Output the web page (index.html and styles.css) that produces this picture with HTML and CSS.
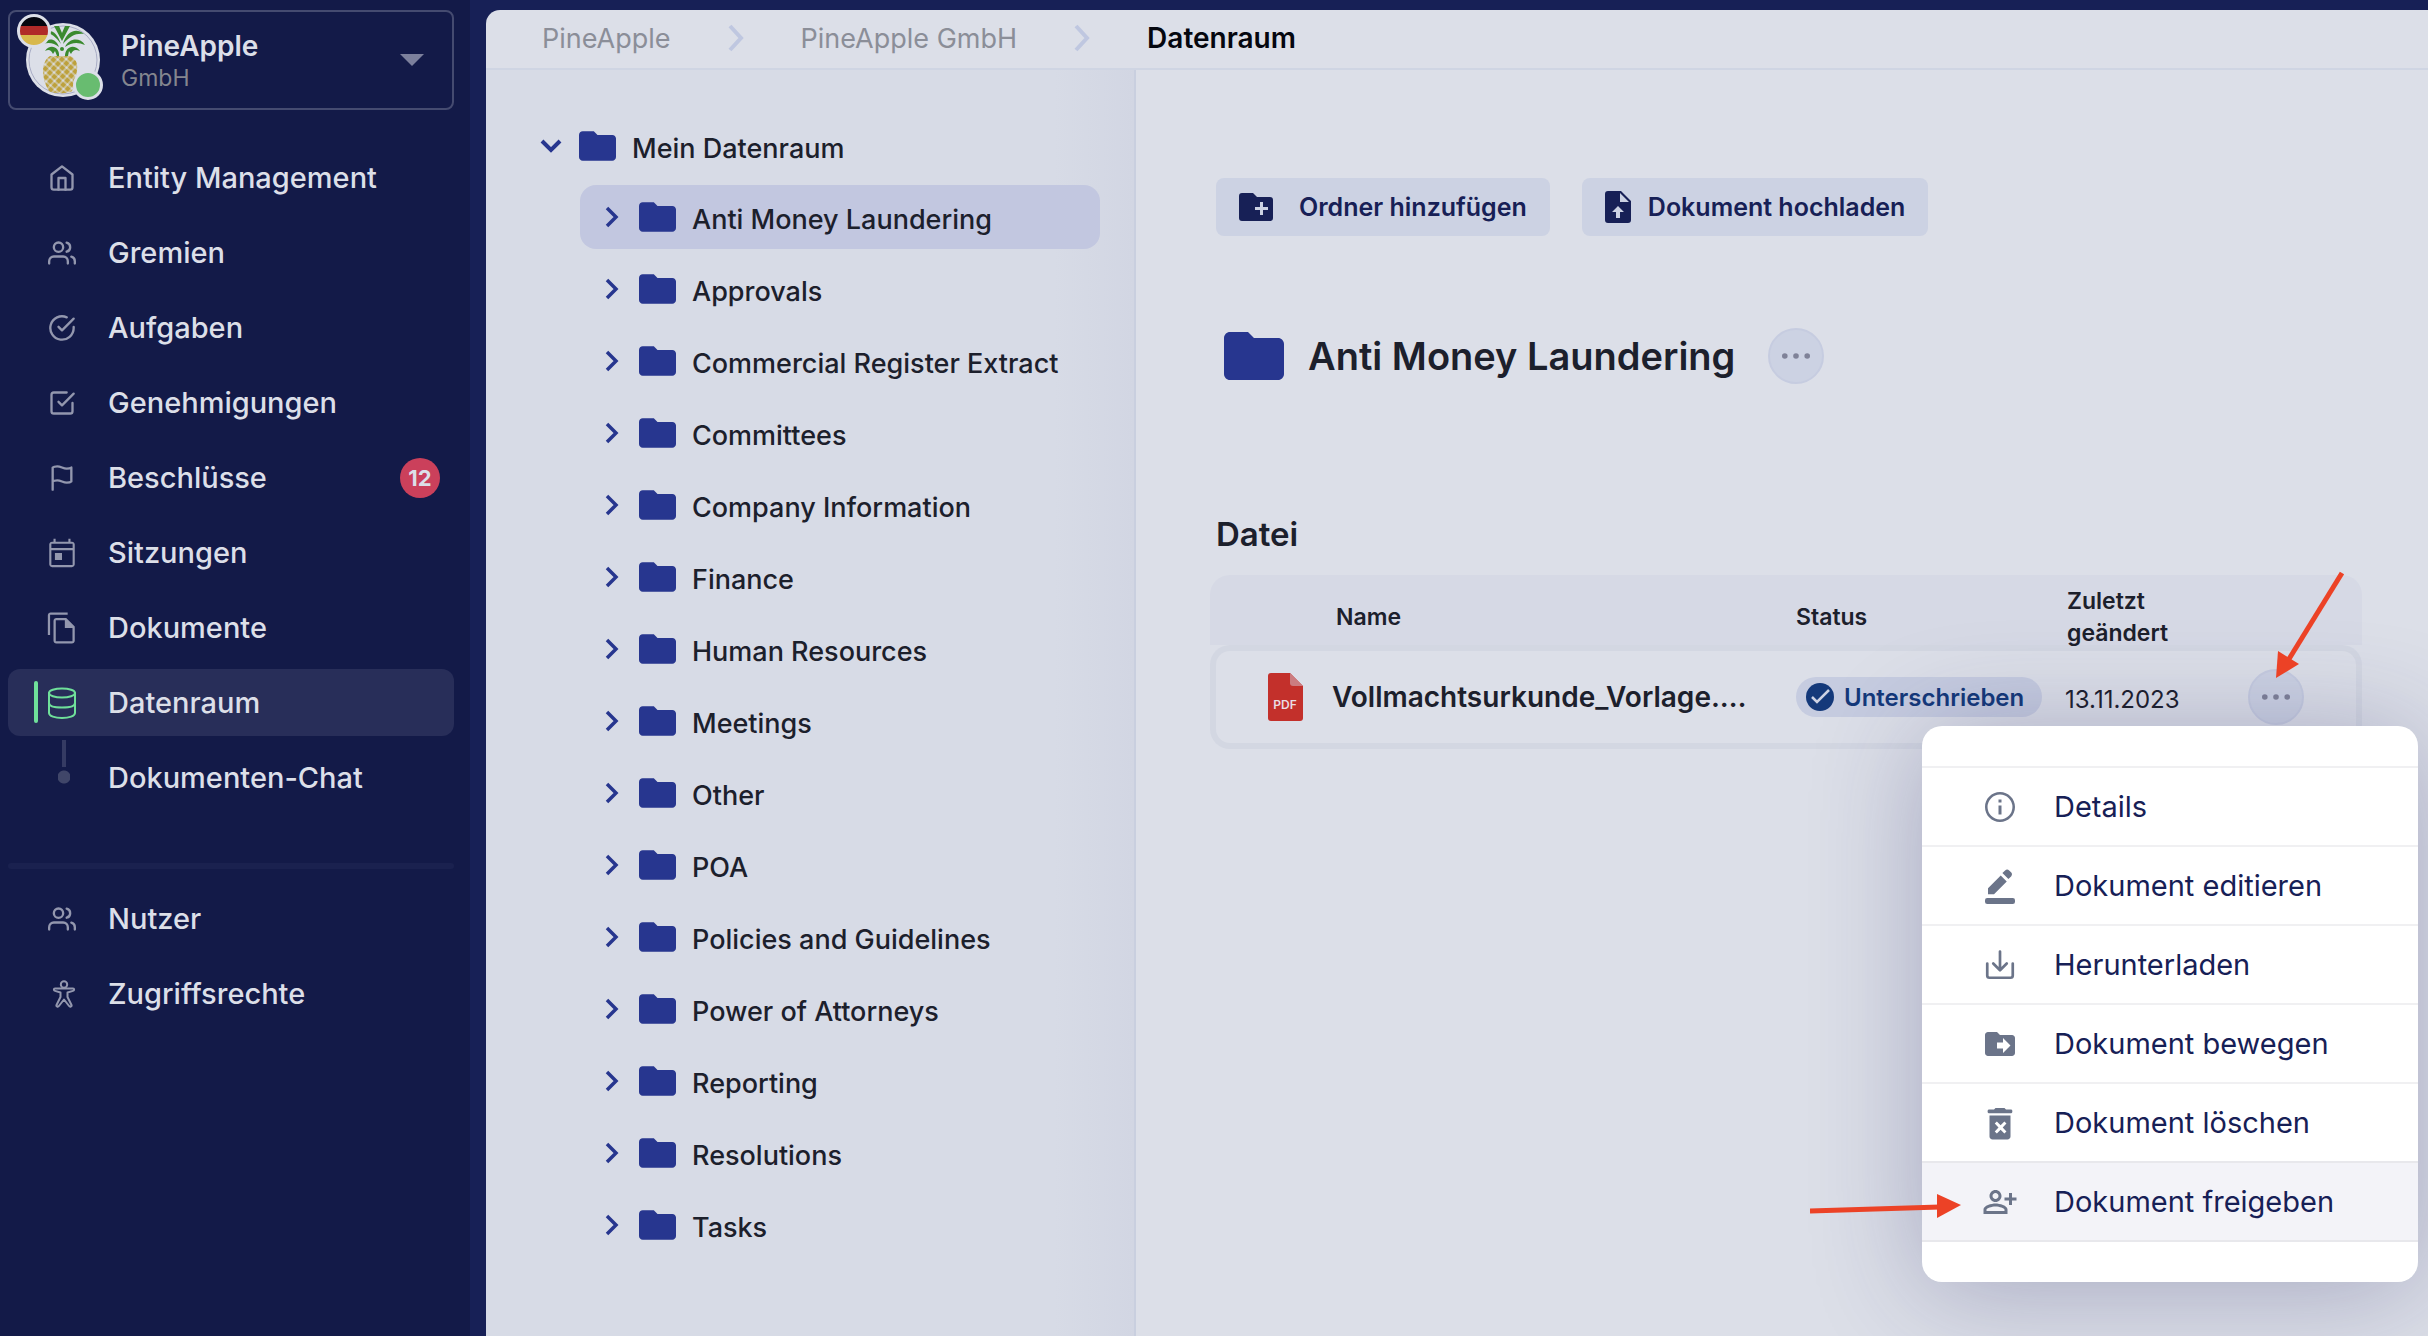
FILE: index.html
```html
<!DOCTYPE html>
<html lang="de">
<head>
  <meta charset="UTF-8" />
  <meta name="viewport" content="width=device-width, initial-scale=1.0"/>
  <title>Datenraum - PineApple GmbH</title>
  <link rel="stylesheet" href="styles.css">
</head>
<body>
  <!-- shared icon shapes -->
  <svg class="sprite" aria-hidden="true">
    <symbol id="i-folder" viewBox="0 0 20 16">
      <path d="M8 0H2C.9 0 0 .9 0 2v12c0 1.1.9 2 2 2h16c1.1 0 2-.9 2-2V4c0-1.1-.9-2-2-2h-8L8 0z"/>
    </symbol>
    <symbol id="i-right" viewBox="0 0 14 22">
      <path d="M2 2l9 9-9 9" fill="none" stroke="currentColor" stroke-width="3.5"/>
    </symbol>
    <symbol id="i-users" viewBox="0 0 24 24">
      <g fill="none" stroke="currentColor" stroke-width="2" stroke-linecap="round" stroke-linejoin="round">
        <path d="M17 21v-2a4 4 0 0 0-4-4H5a4 4 0 0 0-4 4v2"/>
        <circle cx="9" cy="7" r="4"/>
        <path d="M23 21v-2a4 4 0 0 0-3-3.87M16 3.13a4 4 0 0 1 0 7.75"/>
      </g>
    </symbol>
    <symbol id="i-dots" viewBox="0 0 30 6">
      <circle cx="3" cy="3" r="3"/><circle cx="15" cy="3" r="3"/><circle cx="27" cy="3" r="3"/>
    </symbol>
  </svg>

  <div class="app">
    <aside class="sidebar">
      <button class="company" type="button">
        <span class="avatar">
          <svg class="logo" viewBox="0 0 74 74">
            <defs>
              <pattern id="skin" width="6" height="6" patternUnits="userSpaceOnUse" patternTransform="rotate(42)">
                <rect width="6" height="6" fill="#dcdfe8"/>
                <rect x=".5" y=".5" width="5" height="5" rx="1" fill="#bda13c"/>
              </pattern>
            </defs>
            <circle cx="37" cy="37" r="37" fill="#dcdfe8"/>
            <circle cx="37" cy="37" r="34" fill="none" stroke="#a9adc6" stroke-width="1"/>
            <path d="M24 33h20c6 2 8 8 7 14-1 8-1 15-5 21-3 3-19 3-23 0-4-6-6-13-6-20 0-6 2-12 7-15z" fill="url(#skin)"/>
            <g fill="#3a8a2e">
              <path d="M28 3h5l3 7 3-7h5l-8 15z"/>
              <path d="M35 21C31 10 26 6 19 9c6 1 11 5 16 12zM37 21C40 9 50 4 58 11c-8-1-14 2-21 10z"/>
              <path d="M33 24c-3-9-11-10-16-3 6-2 11-1 16 3zM39 24c4-9 15-10 20-2-7-3-13-3-20 2z"/>
              <path d="M33 33c1-9-9-13-14-5 4-2 6-1 8 3l2-3 2 5zM39 33c0-9 9-13 15-5-5-2-7-1-9 3l-2-3-1 5z"/>
              <circle cx="36" cy="26" r="2"/>
            </g>
          </svg>
          <span class="flag"></span>
          <span class="online"></span>
        </span>
        <span class="company-text">
          <strong>PineApple</strong>
          <small>GmbH</small>
        </span>
        <svg class="caret" viewBox="0 0 24 12"><path d="M0 0h24L12 12z"/></svg>
      </button>

      <nav class="menu">
        <a href="#">
          <svg class="ico line" viewBox="0 0 24 24"><path d="M3 9l9-7 9 7v11a2 2 0 0 1-2 2H5a2 2 0 0 1-2-2z"/><path d="M9 22V12h6v10"/></svg>
          <span>Entity Management</span>
        </a>
        <a href="#">
          <svg class="ico"><use href="#i-users"/></svg>
          <span>Gremien</span>
        </a>
        <a href="#">
          <svg class="ico line" viewBox="0 0 24 24"><path d="M22 11.08V12a10 10 0 1 1-5.93-9.14"/><path d="M22 4L12 14.01l-3-3"/></svg>
          <span>Aufgaben</span>
        </a>
        <a href="#">
          <svg class="ico line" viewBox="0 0 24 24"><path d="M9 11l3 3L22 4"/><path d="M21 12v7a2 2 0 0 1-2 2H5a2 2 0 0 1-2-2V5a2 2 0 0 1 2-2h11"/></svg>
          <span>Genehmigungen</span>
        </a>
        <a href="#">
          <svg class="ico line" viewBox="0 0 24 24"><path d="M4 15s1-1 4-1 5 2 8 2 4-1 4-1V3s-1 1-4 1-5-2-8-2-4 1-4 1zM4 22v-7"/></svg>
          <span>Beschlüsse</span>
          <b class="badge">12</b>
        </a>
        <a href="#">
          <svg class="ico big" viewBox="0 0 24 24"><path d="M19 4h-1V2h-1.5v2h-9V2H6v2H5c-1.11 0-2 .9-2 2v14c0 1.1.89 2 2 2h14c1.1 0 2-.9 2-2V6c0-1.1-.9-2-2-2zm.5 16.5h-15V10h15zm0-12h-15v-3h15zM7 12h5v5H7z"/></svg>
          <span>Sitzungen</span>
        </a>
        <a href="#">
          <svg class="ico big" viewBox="0 0 24 24"><path d="M16 1H4c-1.1 0-2 .9-2 2v14h1.6V2.6H16V1zm-1 4H8c-1.1 0-2 .9-2 2v14c0 1.1.89 2 2 2h11c1.1 0 2-.9 2-2V11l-6-6zM7.6 21.4V6.6H14V12h5.4v9.4z"/></svg>
          <span>Dokumente</span>
        </a>
        <a href="#" class="active">
          <svg class="ico line" viewBox="0 0 28 32"><ellipse cx="14" cy="6" rx="13" ry="4.5"/><path d="M1 6v20c0 3 6 5 13 5s13-2 13-5V6M1 16c0 3 6 4.5 13 4.5s13-1.5 13-4.5"/></svg>
          <span>Datenraum</span>
        </a>
        <a href="#" class="sub">
          <i class="branch"></i>
          <span>Dokumenten-Chat</span>
        </a>
      </nav>

      <hr>

      <nav class="menu">
        <a href="#">
          <svg class="ico"><use href="#i-users"/></svg>
          <span>Nutzer</span>
        </a>
        <a href="#">
          <svg class="ico line person" viewBox="0 0 24 28"><circle cx="12" cy="4.5" r="3.2"/><path d="M3 8.5h18c1.5 0 1.5 2 0 2.4l-5.5 1.6v4.5l4 8c.5 1.5-1.5 2.2-2.4 1L12 19.5 6.9 26c-.9 1.2-2.9.5-2.4-1l4-8v-4.5L3 10.9c-1.5-.4-1.5-2.4 0-2.4z"/></svg>
          <span>Zugriffsrechte</span>
        </a>
      </nav>
    </aside>

    <main class="page">
      <nav class="breadcrumb">
        <a href="#">PineApple</a>
        <svg viewBox="0 0 16 28"><path d="M2 2l11 12L2 26"/></svg>
        <a href="#">PineApple GmbH</a>
        <svg viewBox="0 0 16 28"><path d="M2 2l11 12L2 26"/></svg>
        <span>Datenraum</span>
      </nav>

      <div class="columns">
        <section class="tree">
          <a href="#" class="root">
            <svg class="chev-down" viewBox="0 0 22 14"><path d="M2 2l9 9 9-9"/></svg>
            <svg class="folder"><use href="#i-folder"/></svg>
            <span>Mein Datenraum</span>
          </a>
          <ul>
            <li><a href="#" class="selected"><svg class="chev"><use href="#i-right"/></svg><svg class="folder"><use href="#i-folder"/></svg><span>Anti Money Laundering</span></a></li>
            <li><a href="#"><svg class="chev"><use href="#i-right"/></svg><svg class="folder"><use href="#i-folder"/></svg><span>Approvals</span></a></li>
            <li><a href="#"><svg class="chev"><use href="#i-right"/></svg><svg class="folder"><use href="#i-folder"/></svg><span>Commercial Register Extract</span></a></li>
            <li><a href="#"><svg class="chev"><use href="#i-right"/></svg><svg class="folder"><use href="#i-folder"/></svg><span>Committees</span></a></li>
            <li><a href="#"><svg class="chev"><use href="#i-right"/></svg><svg class="folder"><use href="#i-folder"/></svg><span>Company Information</span></a></li>
            <li><a href="#"><svg class="chev"><use href="#i-right"/></svg><svg class="folder"><use href="#i-folder"/></svg><span>Finance</span></a></li>
            <li><a href="#"><svg class="chev"><use href="#i-right"/></svg><svg class="folder"><use href="#i-folder"/></svg><span>Human Resources</span></a></li>
            <li><a href="#"><svg class="chev"><use href="#i-right"/></svg><svg class="folder"><use href="#i-folder"/></svg><span>Meetings</span></a></li>
            <li><a href="#"><svg class="chev"><use href="#i-right"/></svg><svg class="folder"><use href="#i-folder"/></svg><span>Other</span></a></li>
            <li><a href="#"><svg class="chev"><use href="#i-right"/></svg><svg class="folder"><use href="#i-folder"/></svg><span>POA</span></a></li>
            <li><a href="#"><svg class="chev"><use href="#i-right"/></svg><svg class="folder"><use href="#i-folder"/></svg><span>Policies and Guidelines</span></a></li>
            <li><a href="#"><svg class="chev"><use href="#i-right"/></svg><svg class="folder"><use href="#i-folder"/></svg><span>Power of Attorneys</span></a></li>
            <li><a href="#"><svg class="chev"><use href="#i-right"/></svg><svg class="folder"><use href="#i-folder"/></svg><span>Reporting</span></a></li>
            <li><a href="#"><svg class="chev"><use href="#i-right"/></svg><svg class="folder"><use href="#i-folder"/></svg><span>Resolutions</span></a></li>
            <li><a href="#"><svg class="chev"><use href="#i-right"/></svg><svg class="folder"><use href="#i-folder"/></svg><span>Tasks</span></a></li>
          </ul>
        </section>

        <section class="content">
          <div class="actions">
            <button type="button">
              <svg class="add-icon" viewBox="0 0 34 28"><path fill-rule="evenodd" d="M3 0h11l4 4h13a3 3 0 0 1 3 3v18a3 3 0 0 1-3 3H3a3 3 0 0 1-3-3V3a3 3 0 0 1 3-3zM21 9v5h-5v3h5v5h3v-5h5v-3h-5V9z"/></svg>
              <span>Ordner hinzufügen</span>
            </button>
            <button type="button" class="upload">
              <svg class="upload-icon" viewBox="0 0 26 32"><path fill-rule="evenodd" d="M3 0h13l10 10v19a3 3 0 0 1-3 3H3a3 3 0 0 1-3-3V3a3 3 0 0 1 3-3zM15 2v9h9zM13 15l-6 6h4v6h4v-6h4z"/></svg>
              <span>Dokument hochladen</span>
            </button>
          </div>

          <div class="title">
            <svg class="folder"><use href="#i-folder"/></svg>
            <h1>Anti Money Laundering</h1>
            <button class="more" type="button" aria-label="Mehr"><svg><use href="#i-dots"/></svg></button>
          </div>

          <h2>Datei</h2>
          <table>
            <thead>
              <tr>
                <th class="col-icon"></th>
                <th class="col-name">Name</th>
                <th class="col-status">Status</th>
                <th class="col-date"><span>Zuletzt<br>geändert</span></th>
                <th></th>
              </tr>
            </thead>
            <tbody>
              <tr>
                <td class="col-icon">
                  <svg class="pdf" viewBox="0 0 35 48">
                    <path d="M3 0h19l13 13v32a3 3 0 0 1-3 3H3a3 3 0 0 1-3-3V3a3 3 0 0 1 3-3z" fill="#c3302b"/>
                    <path d="M22 0l13 13H25a3 3 0 0 1-3-3z" fill="#cb7c80"/>
                    <text x="17" y="36" text-anchor="middle">PDF</text>
                  </svg>
                </td>
                <td class="col-name">Vollmachtsurkunde_Vorlage.…</td>
                <td class="col-status">
                  <span class="chip">
                    <svg viewBox="0 0 28 28"><circle cx="14" cy="14" r="14" fill="#14397a"/><path d="M6 14l5 5L23 7" fill="none" stroke="#ccd2e4" stroke-width="2.5"/></svg>
                    Unterschrieben
                  </span>
                </td>
                <td class="col-date">13.11.2023</td>
                <td class="col-more"><button class="more" type="button" aria-label="Mehr"><svg><use href="#i-dots"/></svg></button></td>
              </tr>
            </tbody>
          </table>
        </section>
      </div>
    </main>
  </div>

  <!-- row menu -->
  <div class="popup">
    <button type="button"><svg viewBox="0 0 24 24"><path d="M11 7h2v2h-2zm0 4h2v6h-2zm1-9C6.48 2 2 6.48 2 12s4.48 10 10 10 10-4.48 10-10S17.52 2 12 2zm0 18.3a8.3 8.3 0 1 1 0-16.6 8.3 8.3 0 0 1 0 16.6z"/></svg>Details</button>
    <button type="button"><svg viewBox="0 0 24 24"><path d="M4 17.5h4l8.5-8.5-4-4L4 13.5zM19.4 5.6c.8-.8.8-1.9 0-2.7l-1.3-1.3c-.8-.8-1.9-.8-2.7 0l-1.8 1.8 4 4z"/><rect x="2" y="20" width="20" height="4" rx="1.5"/></svg>Dokument editieren</button>
    <button type="button"><svg viewBox="0 0 24 24"><path d="M3.5 11v8c0 .8.7 1.5 1.5 1.5h14c.8 0 1.5-.7 1.5-1.5v-8M12 3v12M7.5 11l4.5 4.5 4.5-4.5" fill="none" stroke="currentColor" stroke-width="1.8" stroke-linecap="round" stroke-linejoin="round"/></svg>Herunterladen</button>
    <button type="button"><svg viewBox="0 0 24 24"><path fill-rule="evenodd" d="M20 6h-8l-2-2H4c-1.1 0-2 .9-2 2v12c0 1.1.9 2 2 2h16c1.1 0 2-.9 2-2V8c0-1.1-.9-2-2-2zm-6 12v-3h-4v-4h4V8l5 5z"/></svg>Dokument bewegen</button>
    <button type="button"><svg viewBox="0 0 24 24"><path fill-rule="evenodd" d="M5 7h14v14c0 1.1-.9 2-2 2H7c-1.1 0-2-.9-2-2zm3.5 5.4L11 15l-2.5 2.6 1.4 1.4 2.5-2.5 2.5 2.5 1.4-1.4-2.5-2.6 2.5-2.6-1.4-1.4-2.5 2.5-2.5-2.5z"/><path d="M4.5 3H8l1-1h6l1 1h3.5c1 0 1 2.5 0 2.5h-15c-1 0-1-2.5 0-2.5z"/></svg>Dokument löschen</button>
    <button type="button" class="hover"><svg viewBox="0 0 24 24"><path d="M20 9V6h-2v3h-3v2h3v3h2v-3h3V9zM9 12c2.21 0 4-1.79 4-4s-1.79-4-4-4-4 1.79-4 4 1.79 4 4 4zm0-6c1.1 0 2 .9 2 2s-.9 2-2 2-2-.9-2-2 .9-2 2-2zm0 7c-2.67 0-8 1.34-8 4v3h16v-3c0-2.66-5.33-4-8-4zm6 5H3v-1c.2-.71 3.3-2 6-2s5.8 1.29 6 2z"/></svg>Dokument freigeben</button>
  </div>

  <!-- pointer arrows -->
  <svg class="arrow arrow-row" viewBox="0 0 70 108"><path d="M67 2L14 88" stroke-width="5"/><path class="head" d="M1 107L3 80l21 13z"/></svg>
  <svg class="arrow arrow-share" viewBox="0 0 152 26"><path d="M0 18l130-4" stroke-width="5"/><path class="head" d="M151 12L127 1v24z"/></svg>
</body>
</html>
```

FILE: styles.css
```css
:root {
  --sidebar: #131a48;
  --frame: #172056;
  --surface: #dcdfe8;
  --tree-bg: #d7dbe6;
  --folder: #27368f;
  --text-color: #1c202c;
  --line: #cfd5e3;
}

* {
  box-sizing: border-box;
}

body {
  margin: 0;
  font-family: Inter, "Liberation Sans", sans-serif;
  color: var(--text-color);
  background-color: var(--frame);
}

a {
  color: inherit;
  text-decoration: none;
}

button {
  font-family: inherit;
  color: inherit;
  border: none;
  cursor: pointer;
}

svg {
  display: block;
  flex-shrink: 0;
  fill: currentColor;
}

.sprite {
  position: absolute;
  width: 0;
  height: 0;
}

.app {
  display: flex;
  min-height: 100vh;
}

/* sidebar */
.sidebar {
  width: 470px;
  flex-shrink: 0;
  padding: 10px 16px 0 8px;
  background-color: var(--sidebar);
  color: #dcdfe8;
}

.company {
  display: flex;
  align-items: center;
  width: 100%;
  height: 100px;
  padding: 0 28px 0 16px;
  background: none;
  border: 2px solid #454b70;
  border-radius: 8px;
  text-align: left;
}

.avatar {
  position: relative;
  margin-right: 21px;
}

.logo {
  width: 74px;
  height: 74px;
}

.flag,
.online {
  position: absolute;
  border: 3px solid #dcdfe8;
  border-radius: 50%;
}

.flag {
  top: -9px;
  left: -9px;
  width: 34px;
  height: 34px;
  background: linear-gradient(#05060f 33%, #b02a28 33% 66%, #d8b84c 66%);
}

.online {
  right: -3px;
  bottom: -3px;
  width: 30px;
  height: 30px;
  background-color: #68bc70;
}

.company-text {
  flex: 1;
  display: flex;
  flex-direction: column;
}

.company-text strong {
  font-size: 28px;
  line-height: 36px;
  font-weight: 600;
}

.company-text small {
  font-size: 23px;
  line-height: 28px;
  color: #84868f;
}

.caret {
  width: 24px;
  height: 12px;
  color: #7c809c;
}

.menu {
  display: flex;
  flex-direction: column;
  gap: 8px;
}

.company + .menu {
  margin-top: 34px;
}

.menu a {
  display: flex;
  align-items: center;
  height: 67px;
  padding: 0 14px 0 34px;
  border-radius: 12px;
  font-size: 29px;
  font-weight: 500;
  position: relative;
}

.menu span {
  flex: 1;
}

.ico {
  width: 28px;
  height: 28px;
  margin: 0 32px 0 6px;
  color: #9397ae;
}

.ico.big {
  width: 34px;
  height: 34px;
  margin: 0 29px 0 3px;
}

.ico.line {
  fill: none;
  stroke: currentColor;
  stroke-width: 2;
  stroke-linecap: round;
  stroke-linejoin: round;
}

.ico.person {
  margin: 0 30px 0 8px;
}

.menu .active {
  background-color: #282e59;
}

.active .ico {
  height: 32px;
  color: #6fe09a;
}

.active::before {
  content: "";
  position: absolute;
  left: 26px;
  top: 12px;
  width: 4px;
  height: 42px;
  border-radius: 2px;
  background-color: #6fe09a;
}

.branch {
  align-self: flex-start;
  width: 12px;
  height: 44px;
  margin: -4px 38px 0 16px;
  background:
    radial-gradient(circle at 6px 37px, #404669 6px, transparent 7px),
    linear-gradient(#353b63, #353b63) 4px 0 / 4px 27px no-repeat;
}

.badge {
  width: 40px;
  height: 40px;
  border-radius: 50%;
  background-color: #cb405b;
  font-size: 22px;
  line-height: 40px;
  font-weight: 700;
  text-align: center;
}

hr {
  height: 6px;
  margin: 52px 0 16px;
  border: none;
  border-radius: 3px;
  background-color: #1a214f;
}

/* page */
.page {
  flex: 1;
  min-width: 0;
  display: flex;
  flex-direction: column;
  margin: 10px 0 0 16px;
  border-top-left-radius: 14px;
  overflow: hidden;
  background-color: var(--surface);
}

.breadcrumb {
  display: flex;
  align-items: center;
  height: 60px;
  padding: 0 56px 2px;
  gap: 57px;
  border-bottom: 2px solid var(--line);
  font-size: 27px;
  color: #8b8e98;
}

.breadcrumb svg {
  width: 16px;
  height: 28px;
  fill: none;
  stroke: #bfc7e0;
  stroke-width: 4;
}

.breadcrumb span {
  font-size: 28px;
  font-weight: 600;
  color: #05070f;
}

.columns {
  flex: 1;
  display: flex;
}

.tree {
  width: 650px;
  flex-shrink: 0;
  padding: 44px 34px 0 54px;
  border-right: 2px solid #c9cfdf;
  background: linear-gradient(to left, #d2d6e3, var(--tree-bg) 80px);
  font-size: 27px;
  font-weight: 500;
}

.tree a {
  display: flex;
  align-items: center;
  height: 64px;
  border-radius: 16px;
}

.tree span {
  padding-top: 4px;
}

.tree .folder {
  width: 37px;
  height: 30px;
  margin-right: 16px;
  color: var(--folder);
}

.chev,
.chev-down {
  color: var(--folder);
}

.chev {
  width: 14px;
  height: 22px;
  margin-right: 20px;
}

.chev-down {
  width: 22px;
  height: 14px;
  margin-right: 17px;
  fill: none;
  stroke: currentColor;
  stroke-width: 4;
}

.tree ul {
  display: flex;
  flex-direction: column;
  gap: 8px;
  margin: 7px 0 0;
  padding: 0 0 0 40px;
  list-style: none;
}

.tree li a {
  padding-left: 25px;
}

.tree .selected {
  background-color: #c2c7e0;
}

/* content */
.content {
  flex: 1;
  padding: 108px 66px 0 74px;
}

.actions {
  display: flex;
  gap: 32px;
  padding-left: 6px;
}

.actions button {
  display: flex;
  align-items: center;
  gap: 26px;
  height: 58px;
  padding: 0 23px;
  border-radius: 8px;
  background-color: #ccd2e3;
  color: #172056;
  font-size: 25px;
  font-weight: 600;
}

.actions .upload {
  gap: 17px;
}

.add-icon {
  width: 34px;
  height: 28px;
}

.upload-icon {
  width: 26px;
  height: 32px;
}

.title {
  display: flex;
  align-items: center;
  margin: 92px 0 0 14px;
}

.title .folder {
  width: 60px;
  height: 48px;
  color: var(--folder);
}

h1 {
  margin: 0 33px 0 24px;
  font-size: 38px;
  line-height: 48px;
  font-weight: 600;
}

.more {
  display: flex;
  align-items: center;
  justify-content: center;
  width: 56px;
  height: 56px;
  padding: 0;
  border: 2px solid #c6cce0;
  border-radius: 50%;
  background-color: #ccd2e3;
  color: #7f8298;
}

.more svg {
  width: 28px;
  height: 6px;
}

h2 {
  margin: 130px 0 21px 6px;
  font-size: 33px;
  line-height: 40px;
  font-weight: 600;
}

table {
  width: 100%;
  table-layout: fixed;
  border-collapse: separate;
  border-spacing: 0;
}

th {
  height: 70px;
  padding: 14px 0 0;
  background-color: #d6d9e5;
  font-size: 23px;
  line-height: 32px;
  font-weight: 600;
  text-align: left;
}

th:first-child {
  border-top-left-radius: 20px;
}

th:last-child {
  border-top-right-radius: 20px;
}

td {
  height: 104px;
  padding: 0;
  border-top: 6px solid #d3d7e2;
  border-bottom: 6px solid #d3d7e2;
}

td:first-child {
  border-left: 6px solid #d3d7e2;
  border-radius: 20px 0 0 20px;
}

td:last-child {
  border-right: 6px solid #d3d7e2;
  border-radius: 0 20px 20px 0;
}

.col-icon {
  width: 122px;
}

.col-name {
  width: 464px;
}

th.col-name {
  padding-left: 4px;
}

.col-status {
  width: 269px;
}

.col-date {
  width: 183px;
}

th.col-date {
  padding: 10px 0 0 2px;
}

/* two lines, keeps the header row at its height */
th.col-date span {
  display: block;
  margin-bottom: -4px;
}

td.col-icon {
  padding-left: 52px;
}

td.col-name {
  font-size: 28px;
  font-weight: 600;
}

td.col-date {
  padding-top: 4px;
  font-size: 24px;
}

.pdf {
  width: 35px;
  height: 48px;
}

.pdf text {
  font-size: 12px;
  font-weight: 600;
  fill: #eadde3;
}

.chip {
  display: inline-flex;
  align-items: center;
  gap: 10px;
  height: 40px;
  padding: 0 18px 0 10px;
  border-radius: 20px;
  background-color: #c6cce0;
  color: #14397a;
  font-size: 24px;
  font-weight: 600;
}

.chip svg {
  width: 28px;
  height: 28px;
}

/* popup */
.popup {
  position: absolute;
  top: 726px;
  right: 10px;
  width: 496px;
  padding: 40px 0;
  border-radius: 20px;
  background-color: #fff;
  box-shadow: 0 8px 110px rgba(40, 40, 100, 0.3);
}

.popup button {
  display: flex;
  align-items: center;
  gap: 36px;
  width: 100%;
  height: 79px;
  padding: 0 0 0 60px;
  border-top: 2px solid #f0f0f2;
  background: none;
  color: #172056;
  font-size: 29px;
}

.popup button.hover {
  height: 81px;
  border-top-color: #e8e8ec;
  border-bottom: 2px solid #e8e8ec;
  background-color: #f3f3f8;
}

.popup svg {
  width: 36px;
  height: 36px;
  color: #6b7489;
}

.arrow {
  position: absolute;
  fill: none;
  stroke: #ec4226;
}

.arrow .head {
  fill: #ec4226;
  stroke: none;
}

.arrow-row {
  top: 571px;
  right: 83px;
  width: 70px;
  height: 108px;
}

.arrow-share {
  top: 1193px;
  right: 466px;
  width: 152px;
  height: 26px;
}
```
